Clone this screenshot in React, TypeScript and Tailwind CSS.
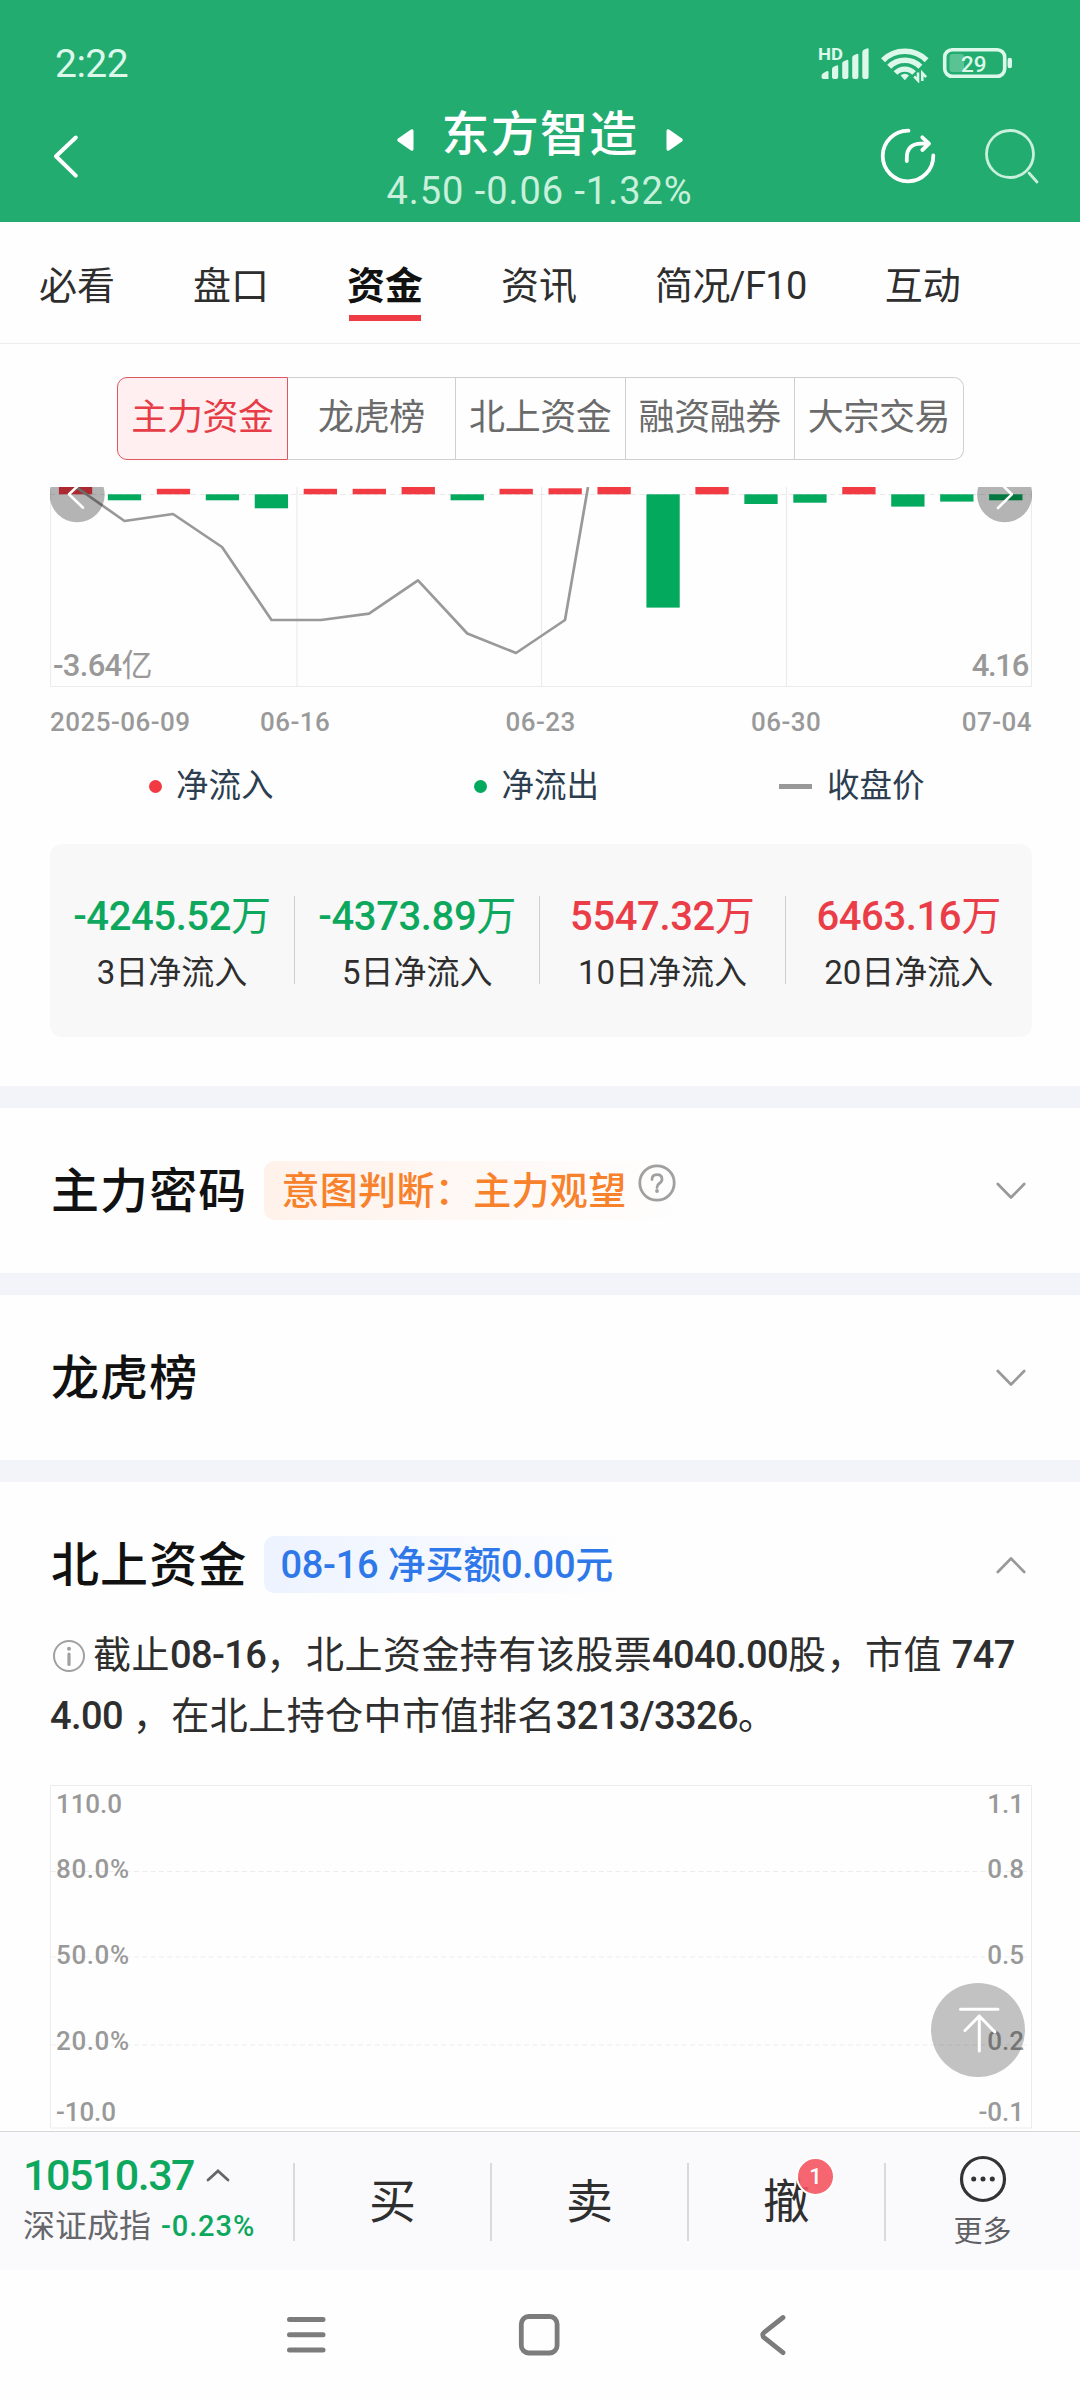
import type { ReactNode } from "react";

const tabs = ["必看", "盘口", "资金", "资讯", "简况/F10", "互动"];
const segments = ["主力资金", "龙虎榜", "北上资金", "融资融券", "大宗交易"];

// Net flow per trading day: positive values rise above the zero line.
const flows = [
  12, -6, 5.5, -6, -14, 5.5, 5.5, 8, -6, 5.5, 6, 10, -113.3, 10, -9.7, -8.4, 7.3, -12.3, -7.3, -6,
];

const closePrice =
  "76,487 124.5,521 173,514 222,547 271.5,620 321,620 369,613.7 418,580.3 467.3,633.5 516,653 565,620 588,487";

const stats = [
  { value: "-4245.52", label: "3日净流入", up: false },
  { value: "-4373.89", label: "5日净流入", up: false },
  { value: "5547.32", label: "10日净流入", up: true },
  { value: "6463.16", label: "20日净流入", up: true },
];

const scaleRows = [
  { left: "110.0", right: "1.1", box: "h-[37px]" },
  { left: "80.0%", right: "0.8", box: "h-[93px]" },
  { left: "50.0%", right: "0.5", box: "h-[79px]" },
  { left: "20.0%", right: "0.2", box: "h-[93px]" },
  { left: "-10.0", right: "-0.1", box: "h-[41px] pt-[8px]" },
];

function StatusBar() {
  return (
    <div className="flex h-[84px] items-end justify-between pl-[55px] pr-[67px] text-[#dcf8ea]">
      <span className="text-[39px] leading-none tracking-[-0.5px]">2:22</span>
      <div className="flex items-end">
        <svg className="mb-[2px] h-[38px] w-[52px]" viewBox="818 44 52 38" fill="currentColor">
          <text
            x="818"
            y="59.500"
            fontSize="17"
            fontWeight="700"
            textLength="25"
            lengthAdjust="spacingAndGlyphs"
            fontFamily="Roboto, sans-serif"
          >
            HD
          </text>
          <path d="M821.5 76q0-2 2-3l3-1.700q2-.8 2 1V79h-5q-2 0-2-2z" />
          <path d="M832 69q0-1.500 1.500-2.200l3-1.300q1.700-.7 1.700 1V77q0 2-2 2h-2.200q-2 0-2-2z" />
          <path d="M842.200 63.500q0-1.500 1.500-2.200l3-1.300q1.700-.7 1.700 1V77q0 2-2 2h-2.200q-2 0-2-2z" />
          <path d="M852.200 57.500q0-1.500 1.500-2.200l3-1.300q1.700-.7 1.700 1V77q0 2-2 2h-2.200q-2 0-2-2z" />
          <path d="M862.300 52q0-1.500 1.500-2.200l3-1.300q1.800-.7 1.800 1V77q0 2-2 2h-2.300q-2 0-2-2z" />
        </svg>
        <svg className="mb-[1px] ml-[10px] h-[38px] w-[50px]" viewBox="880 45 50 38" fill="none" stroke="currentColor">
          <path d="M883 60.200A31 31 0 0 1 926.600 60.200" strokeWidth="5.600" />
          <path d="M889.200 66.700A22 22 0 0 1 920.400 66.700" strokeWidth="5.600" />
          <path d="M895.500 73A13 13 0 0 1 914.100 73" strokeWidth="5.200" />
          <path d="M900.600 75.500a6 6 0 0 1 8.400 0l-4.200 4.700z" fill="currentColor" stroke="none" />
          <path d="M918 72.500v8l-3.800-4.200M922.300 81v-8l3.800 4.200" strokeWidth="2.600" />
        </svg>
        <svg className="mb-[4px] ml-[12px] h-[34px] w-[71px]" viewBox="942 46 71 34" fill="none">
          <rect x="944.700" y="49.700" width="60" height="26.600" rx="7.500" stroke="currentColor" strokeWidth="3.600" />
          <rect x="949.500" y="54" width="14.500" height="18" rx="3" fill="currentColor" opacity="0.3" />
          <rect x="1007.600" y="57.700" width="4.400" height="10.500" rx="2.200" fill="currentColor" />
          <text x="961" y="71.700" fontSize="22.500" fontWeight="500" fill="currentColor" fontFamily="Roboto, sans-serif">
            29
          </text>
        </svg>
      </div>
    </div>
  );
}

function TitleBar() {
  return (
    <div className="flex h-[138px] items-start text-white">
      <svg className="ml-[50px] mt-[46px] h-[52px] w-[32px]" viewBox="50 130 32 52" fill="none">
        <path d="M75.800 137.500 56 156.300l19.800 19.300" stroke="white" strokeWidth="4" strokeLinecap="round" strokeLinejoin="round" />
      </svg>
      <div className="ml-[258px] flex w-[400px] flex-col items-center">
        <div className="mt-[27px] flex h-[48px] items-center">
          <svg className="mt-[9px] h-[22px] w-[17px]" viewBox="0 0 17 22">
            <path d="M1 9.500 14 .5q2.500-1 2.500 1.500v18q0 2.500-2.500 1.500L1 12.500q-1.500-1.500 0-3z" fill="white" />
          </svg>
          <h1 className="ml-[28px] mr-[28px] text-[48px] font-medium leading-none tracking-[1.2px]">东方智造</h1>
          <svg className="mt-[9px] h-[22px] w-[17px]" viewBox="0 0 17 22">
            <path d="M16 9.500 3 .5Q.5-.5.5 2v18Q.5 22.500 3 21.500l13-9q1.500-1.500 0-3z" fill="white" />
          </svg>
        </div>
        <p className="-ml-[1px] mt-[13px] text-[38px] leading-none tracking-[0.950px] text-[#c8f0dc]">4.50 -0.06 -1.32%</p>
      </div>
      <div className="ml-auto mr-[37px] mt-[42px] flex">
        <svg className="h-[60px] w-[60px]" viewBox="879 126 60 60" fill="none" stroke="white" strokeWidth="3.800" strokeLinecap="round" strokeLinejoin="round">
          <path d="M909.500 130.700A25.300 25.300 0 1 0 934.300 155.500" />
          <path d="M907.800 161v-3q0-14 14-14.300h7M923.300 137.300l6.700 6.400-6.700 6.300" />
        </svg>
        <svg className="ml-[45px] h-[60px] w-[60px]" viewBox="984 126 60 60" fill="none" stroke="#c8f0dc" strokeWidth="2.800" strokeLinecap="round">
          <circle cx="1011" cy="154" r="23.500" />
          <path d="m1030 173 8 9" />
        </svg>
      </div>
    </div>
  );
}

function FlowChart() {
  return (
    <div className="relative ml-[50px] mt-[27px] h-[200px] w-[982px]">
      <svg className="block h-[200px] w-[982px]" viewBox="50 487 982 200" fill="none">
        <path d="M50.500 487v199.500h981V487M297 487v199.500M541.500 487v199.500M786.500 487v199.500" stroke="#ececec" strokeWidth="1.200" />
        <path d="M50 494.500h982" stroke="#e8e8e8" strokeDasharray="5 3.300" />
        {flows.map((flow, i) => (
          <rect
            key={i}
            x={58.9 + i * 48.96}
            y={flow > 0 ? 494.3 - flow : 494.3}
            width="33.300"
            height={Math.abs(flow)}
            fill={flow > 0 ? "#f23a43" : "#03a95c"}
          />
        ))}
        <polyline points={closePrice} stroke="#999" strokeWidth="2.700" strokeLinejoin="round" />
        <circle cx="77.200" cy="494.800" r="27.500" fill="#000" opacity="0.290" />
        <circle cx="1004.600" cy="494.800" r="27.500" fill="#000" opacity="0.290" />
        <path d="m83 481-14 13.300 14 13.400M998 481l13.800 13.300L998 508" stroke="#fff" strokeWidth="2.600" strokeLinecap="round" strokeLinejoin="round" />
      </svg>
      <div className="absolute inset-x-0 bottom-[6px] flex justify-between pl-[3px] pr-[4px] text-[31px] leading-none text-[#999]">
        <span>
          <span className="font-medium tracking-[-0.700px]">-3.64</span>亿
        </span>
        <span className="font-medium tracking-[-1.300px]">4.16</span>
      </div>
    </div>
  );
}

function Stats() {
  return (
    <div className="ml-[50px] mt-[40px] flex h-[193px] w-[982px] rounded-[12px] bg-[#f8f8f8] pt-[52px]">
      {stats.map((s, i) => (
        <div
          key={s.label}
          className={`flex h-[88px] flex-col items-center ${i < 3 ? "w-[245.200px] border-r border-[#cfcfcf]" : "flex-1"}`}
        >
          <span className={`mt-[1px] text-[40px] leading-[40px] ${s.up ? "text-[#ea3d47]" : "text-[#0da85e]"}`}>
            <span className="font-medium tracking-[-0.400px]">{s.value}</span>万
          </span>
          <span className="mt-[19px] text-[33px] leading-[33px] text-[#2e2e2e]">{s.label}</span>
        </div>
      ))}
    </div>
  );
}

function Chevron({ up = false }: { up?: boolean }) {
  return (
    <svg className="ml-auto mr-[54px] h-[18px] w-[30px]" viewBox="0 0 30 18" fill="none">
      <path
        d={up ? "M1.800 16 15 2.500 28.200 16" : "M1.800 2 15 15.500 28.200 2"}
        stroke="#999"
        strokeWidth="2.700"
        strokeLinecap="round"
        strokeLinejoin="round"
      />
    </svg>
  );
}

function SectionHead({ title, up, children }: { title: string; up?: boolean; children?: ReactNode }) {
  return (
    <div className="flex h-[165px] items-center pl-[51px]">
      <h2 className="pt-[2px] text-[48px] font-medium leading-[48px] tracking-[1.100px] text-[#111]">{title}</h2>
      {children}
      <Chevron up={up} />
    </div>
  );
}

function Num({ children }: { children: string }) {
  return <span className="font-medium tracking-[-0.600px]">{children}</span>;
}

function HoldingChart() {
  return (
    <div className="relative ml-[50px] mt-[38px] h-[346px] w-[982px]">
      <svg className="absolute inset-0 h-[346px] w-[982px]" viewBox="50 1785 982 346" fill="none">
        <rect x="50.500" y="1785.500" width="981" height="342.500" stroke="#ececec" />
        <path d="M51 1871.500h981M51 1957h981M51 2045h981" stroke="#ededed" strokeDasharray="5 3.300" />
      </svg>
      <div className="relative flex flex-col text-[26px] font-medium leading-none text-[#999]">
        {scaleRows.map((row) => (
          <div key={row.left} className={`flex items-center justify-between pl-[6px] pr-[8px] ${row.box}`}>
            <span className={row.left.endsWith("%") ? "tracking-[0.600px]" : "tracking-[-0.100px]"}>{row.left}</span>
            <span>{row.right}</span>
          </div>
        ))}
      </div>
      <svg className="absolute right-[7px] top-[198px] h-[94px] w-[94px]" viewBox="931 1983 94 94" fill="none" stroke="#fff" strokeWidth="3" strokeLinecap="round" strokeLinejoin="round">
        <circle cx="978" cy="2030" r="47" fill="#000" fillOpacity="0.235" stroke="none" />
        <path d="M960.500 2009.300h37.500M979.300 2051v-35M965 2030.500l14.300-14.500 15.500 16" />
      </svg>
    </div>
  );
}

function TradeBar() {
  return (
    <div className="flex h-[139px] border-t border-[#d6d6d9] bg-[#fafafd]">
      <div className="flex w-[293px] flex-col pl-[23px]">
        <div className="mt-[22px] flex h-[42px] items-center">
          <span className="w-[183px] text-[43px] font-medium leading-[42px] tracking-[-1.500px] text-[#0da85e]">10510.37</span>
          <svg className="h-[14px] w-[24px]" viewBox="0 0 24 14" fill="none">
            <path d="m2 12 10-9 10 9" stroke="#666" strokeWidth="2.800" strokeLinecap="round" />
          </svg>
        </div>
        <div className="mt-[14px] flex items-center leading-[32px]">
          <span className="text-[32px] text-[#66666b]">深证成指</span>
          <span className="ml-[10px] text-[29px] font-medium tracking-[0.900px] text-[#0da85e]">-0.23%</span>
        </div>
      </div>
      <TradeButton label="买" />
      <TradeButton label="卖" />
      <TradeButton label="撤" badge="1" />
      <div className="mt-[31px] flex h-[78px] flex-1 flex-col items-center border-l-2 border-[#d9d9dc] pr-[1px]">
        <svg className="-mt-[9px] h-[50px] w-[50px] shrink-0" viewBox="0 0 50 50" fill="none">
          <circle cx="25" cy="25" r="21.500" stroke="#333" strokeWidth="3.200" />
          <path d="M15.700 25h.01M25 25h.01M34.300 25h.01" stroke="#333" strokeWidth="5" strokeLinecap="round" />
        </svg>
        <span className="mt-[14px] text-[29px] leading-[29px] text-[#606064]">更多</span>
      </div>
    </div>
  );
}

function TradeButton({ label, badge }: { label: string; badge?: string }) {
  return (
    <div className="mt-[31px] flex h-[78px] w-[197px] items-center justify-center border-l-2 border-[#d9d9dc]">
      <span className="relative mb-[1px] text-[47px] leading-[47px] text-[#2f2f2f]">
        {label}
        {badge && (
          <span className="absolute -right-[25px] -top-[21px] flex size-[39px] items-center justify-center rounded-full border-2 border-white bg-[#f55561]/90 text-[22px] font-medium leading-none text-white">
            {badge}
          </span>
        )}
      </span>
    </div>
  );
}

function SystemNav() {
  return (
    <div className="flex h-[130px] bg-[#fefefe] pl-[284px] pt-[42px]">
      <svg className="h-[46px] w-[44px]" viewBox="284 2312 44 46" stroke="#7c7c7c" strokeWidth="5" strokeLinecap="round">
        <path d="M289.500 2319.600h33.500M289.500 2334.800h33.500M289.500 2350h33.500" />
      </svg>
      <svg className="ml-[188px] h-[46px] w-[46px]" viewBox="516 2312 46 46" fill="none">
        <rect x="521.300" y="2316.500" width="35.800" height="36.500" rx="7.500" stroke="#7c7c7c" strokeWidth="4.800" />
      </svg>
      <svg className="ml-[194px] h-[46px] w-[34px]" viewBox="756 2312 34 46" fill="none">
        <path d="m783 2317.500-18.500 14.500q-3.500 3 0 6l18.500 14.700" stroke="#7c7c7c" strokeWidth="4.800" strokeLinecap="round" />
      </svg>
    </div>
  );
}

export default function App() {
  return (
    <div className="h-[2400px] w-[1080px] overflow-hidden bg-[#fefefe] font-['Roboto','Noto_Sans_CJK_SC',sans-serif] whitespace-nowrap">
      <header className="bg-[#22ac6f]">
        <StatusBar />
        <TitleBar />
      </header>

      <nav className="flex h-[122px] gap-[78px] border-b border-[#eee] pl-[39px] pt-[44px] text-[38px] leading-[40px] text-[#2e2e2e]">
        {tabs.map((tab) => (
          <div key={tab} className="flex flex-col items-center">
            <span className={tab === "资金" ? "font-bold text-[#111]" : tab === "简况/F10" ? "tracking-[-0.600px]" : ""}>{tab}</span>
            {tab === "资金" && <span className="mt-[9px] h-[6px] w-[72px] bg-[#ee3b46]" />}
          </div>
        ))}
      </nav>

      <div className="ml-[117px] mt-[33px] flex h-[83px] w-[847px] text-[36px] leading-none">
        {segments.map((segment, i) => (
          <div
            key={segment}
            className={`flex items-center justify-center pb-[1px] ${
              i === 0
                ? "w-[171px] rounded-l-[10px] border border-[#df5560] bg-[#ffeff0] text-[#e63d47]"
                : i === 4
                  ? "flex-1 rounded-r-[10px] border-y border-r border-[#cfcfcf] text-[#6b6b6b]"
                  : i === 1
                    ? "w-[168px] border-y border-r border-[#cfcfcf] text-[#6b6b6b]"
                    : "w-[169.500px] border-y border-r border-[#cfcfcf] text-[#6b6b6b]"
            }`}
          >
            <span className="tracking-[-0.400px]">{segment}</span>
          </div>
        ))}
      </div>

      <FlowChart />
      <div className="ml-[50px] mt-[22px] flex h-[26px] w-[982px] text-[26px] font-medium leading-[26px] tracking-[0.450px] text-[#999]">
        <span className="w-[210px]">2025-06-09</span>
        <span className="w-[245.500px]">06-16</span>
        <span className="w-[245.500px]">06-23</span>
        <span className="flex-1">06-30</span>
        <span>07-04</span>
      </div>
      <div className="mt-[33px] flex h-[36px] items-center text-[32.500px] leading-none text-[#2c3e50]">
        <div className="ml-[149px] flex w-[324.500px] items-center">
          <span className="mr-[14px] size-[13px] rounded-full bg-[#f23a43]" />
          <span>净流入</span>
        </div>
        <div className="flex w-[305.500px] items-center">
          <span className="mr-[15px] size-[13px] rounded-full bg-[#03a95c]" />
          <span>净流出</span>
        </div>
        <div className="flex items-center">
          <span className="mr-[15px] h-[5px] w-[33px] bg-[#999]" />
          <span>收盘价</span>
        </div>
      </div>
      <Stats />

      <div className="mt-[49px] h-[22px] bg-[#f3f4f9]" />
      <SectionHead title="主力密码">
        <div className="ml-[17px] flex h-[59px] w-[420px] items-center rounded-l-[10px] bg-linear-to-r from-[#fff2eb] to-[#fefefe] pl-[17px]">
          <span className="text-[38px] font-medium leading-none tracking-[0.350px] text-[#f8812b]">意图判断：主力观望</span>
          <svg className="-mt-[15px] ml-[10px] size-[40px]" viewBox="0 0 40 40" fill="none" stroke="#a0a0a0" strokeLinecap="round">
            <circle cx="20" cy="20" r="17.200" strokeWidth="2.800" />
            <path d="M15 16.500q0-4.800 5-4.800t5 4.500q0 2.500-2.800 4.300-2.200 1.400-2.200 4" strokeWidth="2.800" />
            <circle cx="20" cy="28" r="1.900" fill="#a0a0a0" stroke="none" />
          </svg>
        </div>
      </SectionHead>
      <div className="h-[22px] bg-[#f3f4f9]" />
      <SectionHead title="龙虎榜" />
      <div className="h-[22px] bg-[#f3f4f9]" />
      <SectionHead title="北上资金" up>
        <div className="ml-[17px] flex h-[57px] w-[365px] items-center rounded-l-[10px] bg-linear-to-r from-[#edf3ff] to-[#fefefe] pl-[16px]">
          <span className="text-[38px] font-medium leading-none tracking-[-0.250px] text-[#2f78ea]">08-16 净买额0.00元</span>
        </div>
      </SectionHead>

      <div className="-mt-[22px] pl-[50px] text-[38px] leading-[61px] tracking-[0.450px] text-[#2e2e2e]">
        <div className="flex items-center">
          <svg className="mr-[7px] size-[36px]" viewBox="0 0 36 36" fill="none" stroke="#a0a0a0" strokeLinecap="round">
            <circle cx="19" cy="18" r="15" strokeWidth="2" />
            <path d="M19 16v10.500" strokeWidth="3.200" />
            <circle cx="19" cy="10.800" r="2" fill="#a0a0a0" stroke="none" />
          </svg>
          <span>
            截止<Num>08-16</Num>
            <span className="tracking-[1.800px]">，</span>北上资金持有该股票<Num>4040.00</Num>股，市值 <Num>747</Num>
          </span>
        </div>
        <div>
          <Num>4.00</Num> ，在北上持仓中市值排名<Num>3213/3326</Num>。
        </div>
      </div>

      <HoldingChart />
      <TradeBar />
      <SystemNav />
    </div>
  );
}
